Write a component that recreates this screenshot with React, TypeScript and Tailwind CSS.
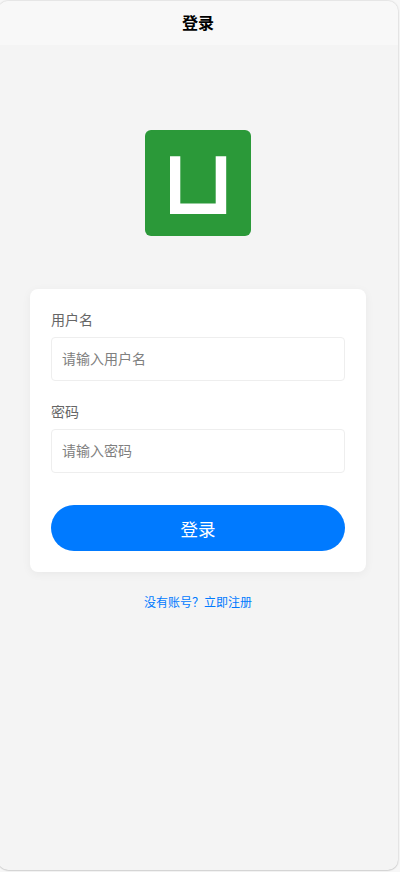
import { useState, type FormEvent } from "react";

interface FieldProps {
  id: string;
  label: string;
  placeholder: string;
  type?: string;
  value: string;
  onChange: (value: string) => void;
}

function Field({ id, label, placeholder, type = "text", value, onChange }: FieldProps) {
  return (
    <div className="flex flex-col gap-[7px]">
      <label htmlFor={id} className="text-sm leading-5 text-[#666]">
        {label}
      </label>
      <input
        id={id}
        type={type}
        value={value}
        placeholder={placeholder}
        onChange={(e) => onChange(e.target.value)}
        className="h-11 w-full rounded border border-[#eee] bg-white px-2.5 pb-0.5 text-sm text-[#333] placeholder:text-[#808080] focus:outline-none"
      />
    </div>
  );
}

function Logo() {
  return (
    <svg width="106" height="106" viewBox="0 0 106 106" aria-hidden="true">
      <rect width="106" height="106" rx="6" fill="#2b9939" />
      <path d="M25 26.3h10.3v47.2h35.4V26.3H81.2V84H25z" fill="#fff" />
    </svg>
  );
}

export default function App() {
  const [username, setUsername] = useState("");
  const [password, setPassword] = useState("");

  const handleSubmit = (e: FormEvent) => {
    e.preventDefault();
  };

  return (
    <div className="h-[872px] w-[400px] overflow-hidden bg-[#f7f7f7] pt-px font-['Noto_Sans','Noto_Sans_CJK_SC',sans-serif]">
      <main className="-ml-0.5 flex h-[869px] w-[400px] flex-col overflow-hidden rounded-[10px] bg-[#f4f4f4] shadow-[0_0_2px_rgba(0,0,0,0.25),0_1px_1px_rgba(0,0,0,0.08)]">
        {/* Navigation bar */}
        <header className="flex h-11 shrink-0 items-center justify-center bg-[#f8f8f8]">
          <h1 className="text-base font-bold text-black">登录</h1>
        </header>

        <div className="flex flex-col items-center px-8 pt-[85px]">
          <Logo />

          <form
            onSubmit={handleSubmit}
            className="mt-[53px] flex h-[283px] w-full flex-col rounded-lg bg-white px-[21px] pt-[21px] shadow-[0_2px_10px_rgba(0,0,0,0.05)]"
          >
            <div className="flex flex-col gap-[21px]">
              <Field
                id="username"
                label="用户名"
                placeholder="请输入用户名"
                value={username}
                onChange={setUsername}
              />
              <Field
                id="password"
                label="密码"
                placeholder="请输入密码"
                type="password"
                value={password}
                onChange={setPassword}
              />
            </div>
            <button
              type="submit"
              className="mt-8 h-[46px] w-full rounded-full bg-[#007aff] pt-0.5 text-[17.5px] text-white"
            >
              登录
            </button>
          </form>

          <a href="#register" className="mt-[22px] text-xs leading-[18px] text-[#007aff]">
            没有账号？立即注册
          </a>
        </div>
      </main>
    </div>
  );
}
